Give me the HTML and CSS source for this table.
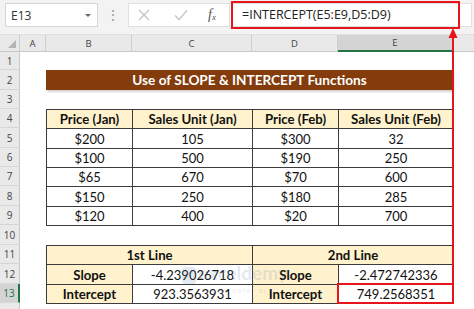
FILE: index.html
```html
<!DOCTYPE html>
<html>
<head>
<meta charset="utf-8">
<link rel="stylesheet" href="styles.css">
</head>
<body>
<div class="app">
  <div class="fbar">
    <div class="namebox"><span>E13</span><span class="caret"></span></div>
    <div class="dots">⋮</div>
    <div class="fbtns">
      <svg class="ic-x" width="12" height="12" viewBox="0 0 12 12"><path d="M1 1L11 11M11 1L1 11" stroke="#c4c4c4" stroke-width="1.3" fill="none"/></svg>
      <svg class="ic-ok" width="14" height="12" viewBox="0 0 14 12"><path d="M1 6.5L5 10.5L13 1.5" stroke="#c4c4c4" stroke-width="1.3" fill="none"/></svg>
      <span class="fx">f<sub>x</sub></span>
    </div>
    <div class="finput">=INTERCEPT(E5:E9,D5:D9)</div>
  </div>

  <div class="sheet">
    <div class="ch corner"><span class="tri"></span></div>
    <div class="ch">A</div>
    <div class="ch">B</div>
    <div class="ch">C</div>
    <div class="ch">D</div>
    <div class="ch sel">E</div>
    <div class="ch last"></div>

    <div class="rh r1">1</div>
    <div class="rh r2">2</div>
    <div class="rh r3">3</div>
    <div class="rh r4">4</div>
    <div class="rh r5">5</div>
    <div class="rh r6">6</div>
    <div class="rh r7">7</div>
    <div class="rh r8">8</div>
    <div class="rh r9">9</div>
    <div class="rh r10">10</div>
    <div class="rh r11">11</div>
    <div class="rh r12">12</div>
    <div class="rh r13 sel">13</div>
    <div class="rh r14"></div>

    <div class="title">Use of SLOPE &amp; INTERCEPT Functions</div>

    <table class="data">
      <colgroup><col class="cb"><col class="cc"><col class="cd"><col class="ce"></colgroup>
      <tr class="hrow"><th>Price (Jan)</th><th>Sales Unit (Jan)</th><th>Price (Feb)</th><th>Sales Unit (Feb)</th></tr>
      <tr class="h20"><td>$200</td><td>105</td><td>$300</td><td>32</td></tr>
      <tr class="h19"><td>$100</td><td>500</td><td>$190</td><td>250</td></tr>
      <tr class="h19"><td>$65</td><td>670</td><td>$70</td><td>600</td></tr>
      <tr class="h20"><td>$150</td><td>250</td><td>$180</td><td>285</td></tr>
      <tr class="h19"><td>$120</td><td>400</td><td>$20</td><td>700</td></tr>
    </table>

    <table class="res">
      <colgroup><col class="cb"><col class="cc"><col class="cd"><col class="ce"></colgroup>
      <tr class="h19"><th colspan="2">1st Line</th><th colspan="2">2nd Line</th></tr>
      <tr class="h20"><th>Slope</th><td>-4.239026718</td><th>Slope</th><td>-2.472742336</td></tr>
      <tr class="h19"><th>Intercept</th><td>923.3563931</td><th>Intercept</th><td>749.2568351</td></tr>
    </table>
  </div>

  <div class="wm">
    <span class="wm-logo"></span>
    <span class="wm-text">exceldemy</span>
    <span class="wm-sub">EXCEL · DATA · BI</span>
  </div>

  <div class="redbox fbox"></div>
  <div class="redbox cellbox"></div>
  <svg class="arrow" width="14" height="256" viewBox="0 0 14 256">
    <path d="M7 8V256" stroke="#e8141b" stroke-width="2"/>
    <path d="M2.5 10L7 0L11.5 10Z" fill="#e8141b"/>
  </svg>
</div>
</body>
</html>
```
FILE: styles.css
```css
* { box-sizing: border-box; }
html, body { margin: 0; padding: 0; background: #fff; }
.app {
  position: relative;
  width: 474px;
  height: 309px;
  overflow: hidden;
  font-family: "Lato", "Liberation Sans", sans-serif;
}
.fbar {
  height: 35px;
  background: #f3f3f3;
  display: flex;
  align-items: flex-start;
  padding-top: 3px;
  border-bottom: 1px solid #e0e0e0;
}
.namebox {
  margin-left: 5px;
  width: 93px;
  height: 24px;
  background: #fff;
  border: 1px solid #d6d6d6;
  display: flex;
  align-items: center;
  justify-content: space-between;
  padding: 0 6px 0 5px;
  font-family: "Open Sans", sans-serif;
  font-size: 12px;
  color: #333;
}
.caret {
  width: 0; height: 0;
  border-left: 3px solid transparent;
  border-right: 3px solid transparent;
  border-top: 3px solid #666;
}
.dots {
  width: 30px;
  text-align: center;
  color: #9a9a9a;
  font-size: 14px;
  line-height: 24px;
}
.fbtns {
  width: 101px;
  height: 24px;
  background: #fff;
  border: 1px solid #e0e0e0;
  border-right: none;
  display: flex;
  align-items: center;
  padding-left: 9px;
}
.ic-x { margin-right: 24px; }
.ic-ok { margin-right: 20px; }
.fx {
  font-family: "Liberation Serif", serif;
  font-style: italic;
  font-size: 14px;
  color: #555;
}
.fx sub { font-size: 9px; vertical-align: -1px; }
.finput {
  flex: 1;
  height: 24px;
  background: #fff;
  border: 1px solid #e0e0e0;
  padding-left: 12px;
  font-family: "Open Sans", sans-serif;
  font-size: 12.5px;
  line-height: 22px;
  color: #222;
  margin-right: 2px;
}

.sheet {
  display: grid;
  grid-template-columns: 20px 26px 86px 120px 86px 115px 21px;
  grid-template-rows: 17px 18px 20px 19px 19px 20px 19px 19px 20px 19px 20px 19px 20px 19px 8px;
  background: #fff;
}
.ch {
  grid-row: 1;
  background: #e9e9e9;
  border-right: 1px solid #cfcfcf;
  border-bottom: 1px solid #c8c8c8;
  font-family: "Open Sans", sans-serif;
  font-size: 9.5px;
  color: #444;
  display: flex;
  align-items: center;
  justify-content: center;
}
.ch.sel {
  background: #d4d4d4;
  border-bottom: 2px solid #217346;
}
.ch.last { border-right: none; }
.corner { position: relative; }
.tri {
  position: absolute;
  right: 3px; bottom: 3px;
  width: 0; height: 0;
  border-left: 8px solid transparent;
  border-bottom: 8px solid #b5b5b5;
}
.rh {
  grid-column: 1;
  background: #e9e9e9;
  border-right: 1px solid #c8c8c8;
  border-bottom: 1px solid #d6d6d6;
  font-family: "Open Sans", sans-serif;
  font-size: 10px;
  color: #444;
  display: flex;
  align-items: center;
  justify-content: center;
}
.rh.sel {
  background: #d4d4d4;
  border-right: 2px solid #217346;
  color: #217346;
}
.r1 { grid-row: 2; } .r2 { grid-row: 3; } .r3 { grid-row: 4; } .r4 { grid-row: 5; }
.r5 { grid-row: 6; } .r6 { grid-row: 7; } .r7 { grid-row: 8; } .r8 { grid-row: 9; }
.r9 { grid-row: 10; } .r10 { grid-row: 11; } .r11 { grid-row: 12; } .r12 { grid-row: 13; }
.r13 { grid-row: 14; } .r14 { grid-row: 15; }

.title {
  grid-column: 3 / 7;
  grid-row: 3;
  background: #843c0c;
  color: #fff;
  font-weight: 700;
  font-size: 13.6px;
  display: flex;
  align-items: center;
  justify-content: center;
  box-shadow: 1px 2px 2px rgba(0,0,0,0.18);
}

table {
  border-collapse: collapse;
  table-layout: fixed;
  width: 407px;
  font-size: 13px;
  color: #111;
}
.cb { width: 86px; } .cc { width: 120px; } .cd { width: 86px; } .ce { width: 115px; }
.data { grid-column: 3 / 7; grid-row: 5 / 11; }
.res { grid-column: 3 / 7; grid-row: 12 / 15; }
th, td {
  border: 1px solid #3c3c3c;
  padding: 0;
  text-align: center;
  white-space: nowrap;
  overflow: hidden;
}
th { background: #fff2cc; font-weight: 700; font-size: 13.2px; }
td { background: #fff; }
.hrow { height: 19px; }
.h19 { height: 19px; }
.h20 { height: 20px; }

.wm {
  position: absolute;
  left: 182px;
  top: 263px;
  width: 110px;
  height: 40px;
  opacity: 0.16;
  pointer-events: none;
}
.wm-logo {
  position: absolute;
  left: 0; top: 4px;
  width: 14px; height: 17px;
  border-radius: 4px;
  background: #5a7fb0;
}
.wm-text {
  position: absolute;
  left: 16px; top: -2px;
  font-size: 19px;
  font-weight: 700;
  color: #5a7fb0;
}
.wm-sub {
  position: absolute;
  left: 20px; top: 24px;
  font-size: 6px;
  letter-spacing: 1px;
  color: #5a7fb0;
}

.redbox {
  position: absolute;
  border: 2px solid #e8141b;
}
.fbox { left: 231px; top: 1px; width: 229px; height: 28px; }
.cellbox { left: 337px; top: 283px; width: 117px; height: 21px; }
.arrow { position: absolute; left: 446px; top: 28px; }
```
